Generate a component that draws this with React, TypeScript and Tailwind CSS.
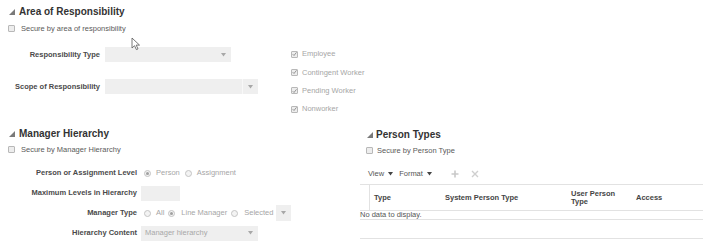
import React from "react";

const Tri = () => (
  <svg width="6" height="6" viewBox="0 0 6 6" className="shrink-0">
    <polygon points="6,0 6,6 0,6" fill="#7a7a7a" />
  </svg>
);

const Box = ({ checked = false }: { checked?: boolean }) => (
  <span className="w-[7px] h-[7px] border border-[#b8b8b8] bg-[#ededed] rounded-[1px] shrink-0 flex items-center justify-center">
    {checked && (
      <svg width="6" height="6" viewBox="0 0 6 6">
        <path d="M0.8 3.2 L2.4 4.8 L5.4 1" stroke="#8c8c8c" strokeWidth="1.1" fill="none" />
      </svg>
    )}
  </span>
);

const Radio = ({ on = false }: { on?: boolean }) => (
  <span className="w-[7px] h-[7px] rounded-full border border-[#c4c4c4] bg-[#f3f3f3] shrink-0 flex items-center justify-center">
    {on && <span className="w-[3px] h-[3px] rounded-full bg-[#a0a0a0]" />}
  </span>
);

const Caret = ({ color = "#a8a8a8" }: { color?: string }) => (
  <svg width="5" height="4" viewBox="0 0 5 4" className="shrink-0">
    <polygon points="0,0 5,0 2.5,3.5" fill={color} />
  </svg>
);

export default function App() {
  return (
    <div className="w-[714px] h-[246px] bg-white relative overflow-hidden font-['Liberation_Sans',Arial,sans-serif] text-[7.5px] leading-none text-[#5a5a5a]">
      {/* Area of Responsibility */}
      <div className="pt-[5px]">
        <div className="flex items-center h-[14px] pl-[9px] gap-[4px]">
          <Tri />
          <span className="text-[10px] font-bold text-[#333]">Area of Responsibility</span>
        </div>
        <div className="flex items-center h-[9px] mt-[5px] pl-[8px] gap-[6px]">
          <Box />
          <span>Secure by area of responsibility</span>
        </div>
        <div className="flex">
          <div className="w-[291px] pt-[14px] flex flex-col gap-[17px]">
            <div className="flex items-center h-[15px]">
              <span className="w-[100px] text-right font-bold text-[#4a4a4a]">Responsibility Type</span>
              <div className="ml-[5px] w-[126px] h-[15px] bg-[#efefef] flex items-center justify-end pr-[5px]">
                <Caret />
              </div>
            </div>
            <div className="flex items-center h-[15px]">
              <span className="w-[100px] text-right font-bold text-[#4a4a4a]">Scope of Responsibility</span>
              <div className="ml-[5px] w-[153px] h-[15px] bg-[#efefef] flex items-center justify-end">
                <div className="h-full w-[16px] border-l border-[#f8f8f8] flex items-center justify-center">
                  <Caret />
                </div>
              </div>
            </div>
          </div>
          <div className="pt-[12px] flex flex-col text-[#a6a6a6]">
            {["Employee", "Contingent Worker", "Pending Worker", "Nonworker"].map((t) => (
              <div key={t} className="h-[18.3px] flex items-center gap-[4px]">
                <Box checked />
                <span>{t}</span>
              </div>
            ))}
          </div>
        </div>
      </div>

      {/* Bottom */}
      <div className="flex mt-[9px]">
        {/* Manager Hierarchy */}
        <div className="w-[357px]">
          <div className="flex items-center h-[14px] pl-[9px] gap-[4px]">
            <Tri />
            <span className="text-[10px] font-bold text-[#333]">Manager Hierarchy</span>
          </div>
          <div className="flex items-center h-[9px] mt-[4px] pl-[8px] gap-[6px]">
            <Box />
            <span>Secure by Manager Hierarchy</span>
          </div>
          <div className="mt-[9px] flex flex-col">
            <div className="h-[20px] flex items-center">
              <span className="w-[137px] text-right font-bold text-[#4a4a4a]">Person or Assignment Level</span>
              <div className="ml-[7px] flex items-center text-[#a6a6a6]">
                <Radio on />
                <span className="ml-[5px]">Person</span>
                <span className="ml-[5px]"><Radio /></span>
                <span className="ml-[5px]">Assignment</span>
              </div>
            </div>
            <div className="h-[20px] flex items-center">
              <span className="w-[137px] text-right font-bold text-[#4a4a4a]">Maximum Levels in Hierarchy</span>
              <div className="ml-[4px] w-[39px] h-[15px] bg-[#efefef]" />
            </div>
            <div className="h-[20px] flex items-center">
              <span className="w-[137px] text-right font-bold text-[#4a4a4a]">Manager Type</span>
              <div className="ml-[7px] flex items-center text-[#a6a6a6]">
                <Radio />
                <span className="ml-[5px]">All</span>
                <span className="ml-[4px]"><Radio on /></span>
                <span className="ml-[6px]">Line Manager</span>
                <span className="ml-[4px]"><Radio /></span>
                <span className="ml-[6px]">Selected</span>
                <div className="ml-[3px] w-[15px] h-[16px] bg-[#efefef] flex items-center justify-center">
                  <Caret />
                </div>
              </div>
            </div>
            <div className="h-[20px] flex items-center">
              <span className="w-[137px] text-right font-bold text-[#4a4a4a]">Hierarchy Content</span>
              <div className="ml-[4px] w-[117px] h-[15px] bg-[#efefef] flex items-center justify-between pl-[4px] pr-[5px] text-[#a8a8a8]">
                <span>Manager hierarchy</span>
                <Caret />
              </div>
            </div>
          </div>
        </div>

        {/* Person Types */}
        <div className="w-[346px] pt-[1px]">
          <div className="flex items-center h-[14px] pl-[10px] gap-[3px]">
            <Tri />
            <span className="text-[10px] font-bold text-[#333]">Person Types</span>
          </div>
          <div className="flex items-center h-[9px] mt-[4px] pl-[9px] gap-[4px]">
            <Box />
            <span>Secure by Person Type</span>
          </div>
          <div className="mt-[13px] h-[12px] pl-[11px] flex items-center text-[#555]">
            <span>View</span>
            <span className="ml-[4px]"><Caret color="#444" /></span>
            <span className="ml-[6px]">Format</span>
            <span className="ml-[4px]"><Caret color="#444" /></span>
            <svg width="8" height="8" viewBox="0 0 8 8" className="ml-[19px]">
              <path d="M4 0.5 V7.5 M0.5 4 H7.5" stroke="#c9c9c9" strokeWidth="1.6" />
            </svg>
            <svg width="8" height="8" viewBox="0 0 8 8" className="ml-[12px]">
              <path d="M1 1 L7 7 M7 1 L1 7" stroke="#cfcfcf" strokeWidth="1.4" />
            </svg>
          </div>
          <div className="mt-[4px] ml-[3px]">
            <div className="h-[27px] border-y border-[#e2e2e2] flex items-stretch font-bold text-[#444]">
              <div className="w-[10px] border-r border-[#e2e2e2]" />
              <div className="w-[70px] pl-[4px] flex items-center">Type</div>
              <div className="w-[126px] pl-[5px] flex items-center">System Person Type</div>
              <div className="w-[65px] pl-[5px] flex items-center leading-[8px]">User Person Type</div>
              <div className="pl-[5px] flex items-center">Access</div>
            </div>
            <div className="h-[9px] border-b border-[#e2e2e2] flex items-center text-[#555]">
              No data to display.
            </div>
            <div className="h-[19px] border-b border-[#e2e2e2]" />
          </div>
        </div>
      </div>

      {/* Mouse cursor */}
      <svg width="10" height="14" viewBox="0 0 10 14" className="absolute left-[131px] top-[37px]">
        <path d="M1 1 L1 11 L3.5 8.7 L5.4 12.6 L7 11.9 L5.2 8.1 L8.5 8.1 Z" fill="white" stroke="#555" strokeWidth="0.8" strokeLinejoin="round" />
      </svg>
    </div>
  );
}
